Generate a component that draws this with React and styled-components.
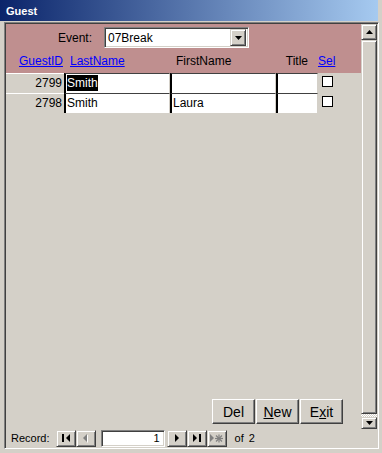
import React from 'react'
import styled, { createGlobalStyle } from 'styled-components'

const GlobalStyle = createGlobalStyle`
  html, body {
    margin: 0;
    padding: 0;
    background: #d4d0c8;
  }
  body {
    font-family: "Liberation Sans", Arial, sans-serif;
    font-size: 12px;
    color: #000;
  }
`

const rows = [
  { id: 2799, last: 'Smith', first: '', title: '', selected: true },
  { id: 2798, last: 'Smith', first: 'Laura', title: '', selected: false },
]

// raised 3D edge used by buttons and the scroll thumb
const raised = `
  box-sizing: border-box;
  background: #d4d0c8;
  border: 1px solid;
  border-color: #d4d0c8 #404040 #404040 #d4d0c8;
  box-shadow: inset 1px 1px #fff, inset -1px -1px #808080;
`

const sunken = `
  box-sizing: border-box;
  background: #fff;
  border: 1px solid;
  border-color: #808080 #fff #fff #808080;
  box-shadow: inset 1px 1px #404040, inset -1px -1px #d4d0c8;
`

const Window = styled.div`
  width: 382px;
  height: 453px;
  display: flex;
  flex-direction: column;
  background: #d4d0c8;
  overflow: hidden;
`

const TitleBar = styled.div`
  height: 21px;
  margin-right: 4px;
  padding-left: 6px;
  display: flex;
  align-items: center;
  background: linear-gradient(to right, #0a246a, #a6caf0);
  color: #fff;
  font-weight: bold;
  font-size: 11px;
`

const Frame = styled.div`
  flex: 1;
  display: flex;
  padding: 1px 3px 4px 4px;
  min-height: 0;
`

const Client = styled.div`
  flex: 1;
  display: flex;
  flex-direction: column;
  border: 1px solid;
  border-color: #808080 #fff #fff #808080;
  padding: 1px;
  box-shadow: inset 1px 1px #404040, inset -1px -1px #d4d0c8;
  min-height: 0;
`

const Main = styled.div`
  flex: 1;
  display: flex;
  min-height: 0;
`

const Section = styled.div`
  flex: 1;
  display: flex;
  flex-direction: column;
`

const Header = styled.div`
  height: 49px;
  background: #bf8f8f;
  display: flex;
  flex-direction: column;
`

const EventRow = styled.div`
  display: flex;
  align-items: center;
  height: 21px;
  margin-top: 3px;
`

const EventLabel = styled.div`
  width: 86px;
  text-align: right;
`

const Combo = styled.div`
  ${sunken}
  margin-left: 12px;
  width: 145px;
  height: 21px;
  display: flex;
  align-items: center;
  padding: 2px;
`

const ComboText = styled.div`
  flex: 1;
  padding-left: 1px;
`

const DropButton = styled.div`
  ${raised}
  width: 16px;
  height: 17px;
  display: flex;
  align-items: center;
  justify-content: center;
`

const LabelRow = styled.div`
  flex: 1;
  display: flex;
  align-items: center;
`

const ColLabel = styled.div`
  width: ${p => p.$w}px;
  box-sizing: border-box;
  text-align: ${p => p.$align || 'left'};
  padding: ${p => p.$pad || '0'};
  color: ${p => (p.$link ? '#0000ff' : '#000')};
  text-decoration: ${p => (p.$link ? 'underline' : 'none')};
  white-space: nowrap;
`

const Detail = styled.div`
  flex: 1;
  display: flex;
  flex-direction: column;
`

const Row = styled.div`
  display: flex;
  height: 20px;
`

const IdCell = styled.div`
  width: 58px;
  box-sizing: border-box;
  border-top: 1px solid #fff;
  text-align: right;
  padding-right: 2px;
  line-height: 19px;
`

const TextCell = styled.div`
  width: ${p => p.$w}px;
  box-sizing: border-box;
  background: #fff;
  border-top: 1px solid #404040;
  border-left: 2px solid #000;
  border-right: 1px solid #d4d0c8;
  padding-left: 1px;
  line-height: 18px;
  white-space: nowrap;
  overflow: hidden;
`

const Highlight = styled.span`
  background: #000;
  color: #fff;
  display: inline-block;
  line-height: 16px;
`

const CheckCell = styled.div`
  padding: 3px 0 0 4px;
`

const CheckBox = styled.div`
  width: 11px;
  height: 11px;
  box-sizing: border-box;
  border: 1px solid #000;
  background: #fff;
`

const Footer = styled.div`
  margin-top: auto;
  display: flex;
  justify-content: flex-end;
  gap: 1px;
  padding: 0 18px 5px 0;
`

const CmdButton = styled.div`
  ${raised}
  width: 43px;
  height: 25px;
  display: flex;
  align-items: center;
  justify-content: center;
  font-size: 14px;
  border-color: #fff #404040 #404040 #fff;
  box-shadow: inset -1px -1px #808080;
  u {
    text-decoration: underline;
  }
`

const ScrollBar = styled.div`
  width: 16px;
  display: flex;
  flex-direction: column;
  background: repeating-conic-gradient(#fff 0 25%, #d4d0c8 0 50%) 0 0 / 2px 2px;
`

const ScrollButton = styled.div`
  ${raised}
  height: ${p => p.$h}px;
  display: flex;
  align-items: center;
  justify-content: center;
`

const Thumb = styled.div`
  ${raised}
  flex: 1;
  margin-bottom: 3px;
`

const NavBar = styled.div`
  height: 18px;
  display: flex;
  align-items: center;
  padding-left: 5px;
  font-size: 11px;
`

const RecordLabel = styled.div`
  margin-right: 6px;
`

const NavButton = styled.div`
  ${raised}
  width: 20px;
  height: 17px;
  display: flex;
  align-items: center;
  justify-content: center;
  margin-right: ${p => p.$mr || 0}px;
`

const RecordBox = styled.div`
  ${sunken}
  width: 64px;
  height: 17px;
  text-align: right;
  padding-right: 4px;
  line-height: 15px;
  margin-right: 2px;
`

const OfText = styled.div`
  margin-left: 8px;
  span {
    margin-left: 5px;
  }
`

const Arrow = ({ dir = 'down', color = '#000' }) => {
  const pts = {
    down: '0,0 7,0 3.5,4',
    up: '0,4 7,4 3.5,0',
  }[dir]
  return (
    <svg width="7" height="4" viewBox="0 0 7 4">
      <polygon points={pts} fill={color} />
    </svg>
  )
}

const NavIcon = ({ kind }) => {
  if (kind === 'first')
    return (
      <svg width="8" height="8" viewBox="0 0 8 8">
        <rect x="0" y="0" width="2" height="8" fill="#000" />
        <polygon points="8,0 8,8 4,4" fill="#000" />
      </svg>
    )
  if (kind === 'prev')
    return (
      <svg width="5" height="9" viewBox="0 0 5 9">
        <polygon points="4,0 4,8 0,4" fill="#808080" />
        <polygon points="5,1 5,9 4,8 4,1" fill="#fff" />
      </svg>
    )
  if (kind === 'next')
    return (
      <svg width="4" height="8" viewBox="0 0 4 8">
        <polygon points="0,0 0,8 4,4" fill="#000" />
      </svg>
    )
  if (kind === 'last')
    return (
      <svg width="8" height="8" viewBox="0 0 8 8">
        <polygon points="0,0 0,8 4,4" fill="#000" />
        <rect x="6" y="0" width="2" height="8" fill="#000" />
      </svg>
    )
  return (
    <svg width="13" height="9" viewBox="0 0 13 9">
      <polygon points="0,0 0,8 4,4" fill="#808080" />
      <g stroke="#808080" strokeWidth="1.2">
        <line x1="9" y1="0.5" x2="9" y2="8.5" />
        <line x1="5" y1="4.5" x2="13" y2="4.5" />
        <line x1="6" y1="1.5" x2="12" y2="7.5" />
        <line x1="12" y1="1.5" x2="6" y2="7.5" />
      </g>
    </svg>
  )
}

export default function App() {
  return (
    <>
      <GlobalStyle />
      <Window>
        <TitleBar>Guest</TitleBar>
        <Frame>
          <Client>
            <Main>
              <Section>
                <Header>
                  <EventRow>
                    <EventLabel>Event:</EventLabel>
                    <Combo>
                      <ComboText>07Break</ComboText>
                      <DropButton>
                        <Arrow dir="down" />
                      </DropButton>
                    </Combo>
                  </EventRow>
                  <LabelRow>
                    <ColLabel $w={58} $align="right" $pad="0 1px 0 0" $link>GuestID</ColLabel>
                    <ColLabel $w={106} $pad="0 0 0 6px" $link>LastName</ColLabel>
                    <ColLabel $w={106} $pad="0 0 0 6px">FirstName</ColLabel>
                    <ColLabel $w={42} $align="right" $pad="0 10px 0 0">Title</ColLabel>
                    <ColLabel $w={30} $link>Sel</ColLabel>
                  </LabelRow>
                </Header>
                <Detail>
                  {rows.map(r => (
                    <Row key={r.id}>
                      <IdCell>{r.id}</IdCell>
                      <TextCell $w={106}>
                        {r.selected ? <Highlight>{r.last}</Highlight> : r.last}
                      </TextCell>
                      <TextCell $w={106}>{r.first}</TextCell>
                      <TextCell $w={42}>{r.title}</TextCell>
                      <CheckCell>
                        <CheckBox />
                      </CheckCell>
                    </Row>
                  ))}
                  <Footer>
                    <CmdButton>Del</CmdButton>
                    <CmdButton>
                      <span><u>N</u>ew</span>
                    </CmdButton>
                    <CmdButton>
                      <span>E<u>x</u>it</span>
                    </CmdButton>
                  </Footer>
                </Detail>
              </Section>
              <ScrollBar>
                <ScrollButton $h={16}>
                  <Arrow dir="up" />
                </ScrollButton>
                <Thumb />
                <ScrollButton $h={12}>
                  <Arrow dir="down" />
                </ScrollButton>
              </ScrollBar>
            </Main>
            <NavBar>
              <RecordLabel>Record:</RecordLabel>
              <NavButton><NavIcon kind="first" /></NavButton>
              <NavButton $mr={5}><NavIcon kind="prev" /></NavButton>
              <RecordBox>1</RecordBox>
              <NavButton><NavIcon kind="next" /></NavButton>
              <NavButton><NavIcon kind="last" /></NavButton>
              <NavButton><NavIcon kind="new" /></NavButton>
              <OfText>of<span>2</span></OfText>
            </NavBar>
          </Client>
        </Frame>
      </Window>
    </>
  )
}
